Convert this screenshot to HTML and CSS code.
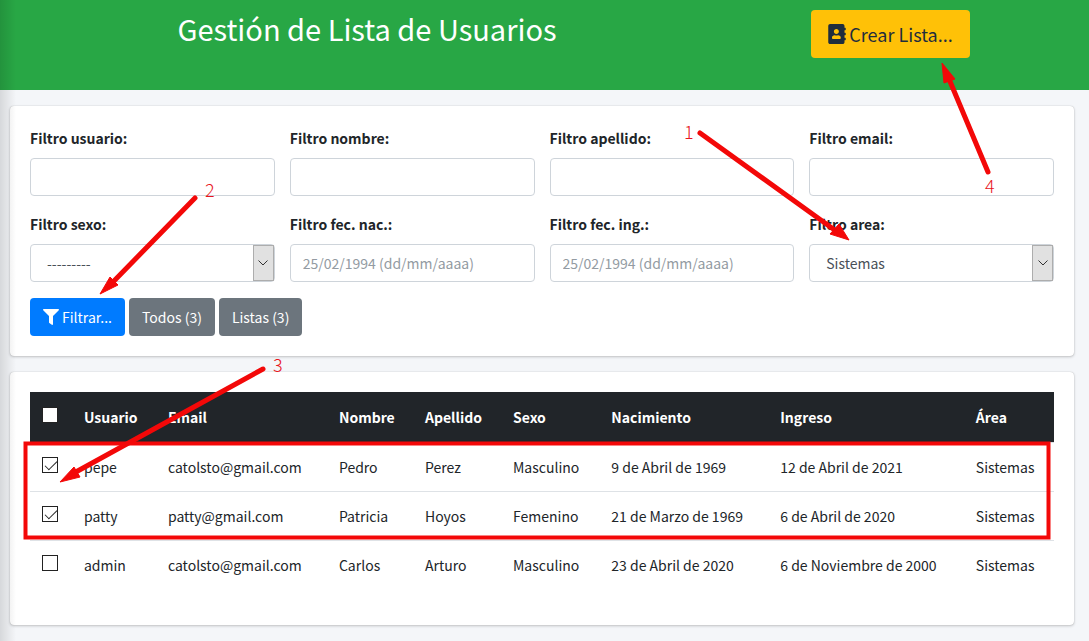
FILE: index.html
```
<!DOCTYPE html>
<html lang="es">
<head>
<meta charset="utf-8">
<title>Gestión de Lista de Usuarios</title>
<link rel="stylesheet" href="styles.css">
</head>
<body>
<header class="top">
  <h1 class="title">Gestión de Lista de Usuarios</h1>
  <div class="top-action">
    <button type="button" class="btn btn-lg btn-warning">
      <svg class="icon-book" viewBox="0 0 448 512" aria-hidden="true"><path fill="currentColor" d="M436 160c6.6 0 12-5.4 12-12v-40c0-6.600-5.400-12-12-12h-20V48c0-26.500-21.500-48-48-48H48C21.500 0 0 21.500 0 48v416c0 26.500 21.500 48 48 48h320c26.500 0 48-21.500 48-48v-48h20c6.600 0 12-5.400 12-12v-40c0-6.600-5.400-12-12-12h-20v-64h20c6.600 0 12-5.400 12-12v-40c0-6.600-5.400-12-12-12h-20v-64h20zm-228-32c35.300 0 64 28.700 64 64s-28.700 64-64 64-64-28.700-64-64 28.700-64 64-64zm112 236.800c0 10.600-10 19.200-22.400 19.200H118.400C106 384 96 375.400 96 364.800v-19.200c0-31.800 30.100-57.600 67.200-57.600h5c12.300 5.100 25.700 8 39.800 8s27.600-2.900 39.800-8h5c37.100 0 67.200 25.800 67.200 57.600v19.200z"/></svg>
      Crear Lista...
    </button>
  </div>
</header>

<main class="content">
  <form class="card">
    <div class="filters">
      <div class="field"><label for="usuario">Filtro usuario:</label><input class="control" id="usuario" type="text"></div>
      <div class="field"><label for="nombre">Filtro nombre:</label><input class="control" id="nombre" type="text"></div>
      <div class="field"><label for="apellido">Filtro apellido:</label><input class="control" id="apellido" type="text"></div>
      <div class="field"><label for="email">Filtro email:</label><input class="control" id="email" type="text"></div>
      <div class="field"><label for="sexo">Filtro sexo:</label>
        <div class="select-wrap">
          <select class="control select" id="sexo"><option>---------</option><option>Masculino</option><option>Femenino</option></select>
          <span class="drop"><svg viewBox="0 0 10 6" aria-hidden="true"><path d="M.5.5 5 5 9.500.5" fill="none" stroke="#333"/></svg></span>
        </div>
      </div>
      <div class="field"><label for="nac">Filtro fec. nac.:</label><input class="control" id="nac" type="text" placeholder="25/02/1994 (dd/mm/aaaa)"></div>
      <div class="field"><label for="ing">Filtro fec. ing.:</label><input class="control" id="ing" type="text" placeholder="25/02/1994 (dd/mm/aaaa)"></div>
      <div class="field"><label for="area">Filtro area:</label>
        <div class="select-wrap">
          <select class="control select" id="area"><option>Sistemas</option></select>
          <span class="drop"><svg viewBox="0 0 10 6" aria-hidden="true"><path d="M.5.5 5 5 9.500.5" fill="none" stroke="#333"/></svg></span>
        </div>
      </div>
    </div>
    <div class="actions">
      <button type="button" class="btn btn-primary">
        <svg class="icon-filter" viewBox="0 0 512 512" aria-hidden="true"><path fill="currentColor" d="M487.976 0H24.028C2.710 0-8.047 25.866 7.058 40.971L192 225.941V432c0 7.831 3.821 15.170 10.237 19.662l80 55.980C298.020 518.690 320 507.493 320 487.980V225.941l184.947-184.970C520.021 25.896 509.338 0 487.976 0z"/></svg>
        Filtrar...
      </button>
      <button type="button" class="btn btn-secondary">Todos (3)</button>
      <button type="button" class="btn btn-secondary">Listas (3)</button>
    </div>
  </form>

  <section class="card">
    <table class="users">
      <colgroup><col class="c-check"><col class="c-user"><col class="c-mail"><col class="c-name"><col class="c-last"><col class="c-sex"><col class="c-born"><col class="c-start"><col class="c-area"></colgroup>
      <thead>
        <tr><th><input type="checkbox" class="check" aria-label="Seleccionar todos"></th><th>Usuario</th><th>Email</th><th>Nombre</th><th>Apellido</th><th>Sexo</th><th>Nacimiento</th><th>Ingreso</th><th>Área</th></tr>
      </thead>
      <tbody>
        <tr><td><input type="checkbox" class="check" aria-label="Seleccionar pepe" checked></td><td>pepe</td><td>catolsto@gmail.com</td><td>Pedro</td><td>Perez</td><td>Masculino</td><td>9 de Abril de 1969</td><td>12 de Abril de 2021</td><td>Sistemas</td></tr>
        <tr><td><input type="checkbox" class="check" aria-label="Seleccionar patty" checked></td><td>patty</td><td>patty@gmail.com</td><td>Patricia</td><td>Hoyos</td><td>Femenino</td><td>21 de Marzo de 1969</td><td>6 de Abril de 2020</td><td>Sistemas</td></tr>
        <tr><td><input type="checkbox" class="check" aria-label="Seleccionar admin"></td><td>admin</td><td>catolsto@gmail.com</td><td>Carlos</td><td>Arturo</td><td>Masculino</td><td>23 de Abril de 2020</td><td>6 de Noviembre de 2000</td><td>Sistemas</td></tr>
      </tbody>
    </table>
  </section>
</main>

<svg class="notes" viewBox="0 0 1089 641" width="1089" height="641">
  <g class="line">
    <path d="M700 133 836 231"/>
    <path d="M195 198 112 283"/>
    <path d="M263 369 74 473"/>
    <path d="M988 172 949 79"/>
    <rect class="frame" x="25.500" y="443.500" width="1023" height="94"/>
  </g>
  <g class="head">
    <path d="M849 240 839 224 830 234z"/>
    <path d="M100 294 110 277 118 285z"/>
    <path d="M60 482 74 467 80 477z"/>
    <path d="M942 63 944 83 955 79z"/>
  </g>
  <g class="digit">
    <text x="684" y="139">1</text>
    <text x="205" y="197">2</text>
    <text x="273" y="372">3</text>
    <text x="985" y="193">4</text>
  </g>
</svg>
</body>
</html>
```
FILE: styles.css
```
* { box-sizing: border-box; }

body {
  margin: 0;
  min-height: 100vh;
  background: #f4f6f9;
  color: #212529;
  font: 14px/24px "Noto Sans CJK SC", "Noto Sans", sans-serif;
}

body::before {
  content: "";
  position: absolute;
  inset: 0 auto 0 0;
  width: 16px;
  background: linear-gradient(to right, rgba(0, 0, 0, .12), rgba(0, 0, 0, 0));
  z-index: 1;
  pointer-events: none;
}

.top {
  display: grid;
  grid-template-columns: 2fr 1fr;
  align-items: start;
  min-height: 90px;
  padding: 10px 24px 0 18px;
  background: #28a745;
}

.title {
  margin: 0;
  color: #fff;
  font-size: 29px;
  font-weight: 400;
  line-height: 36px;
  text-align: center;
}

.top-action { display: flex; justify-content: center; }

.content {
  display: grid;
  gap: 16px;
  padding: 16px 15px 15px 10px;
}

.card {
  padding: 20px;
  background: #fff;
  border-radius: 4px;
  box-shadow: 0 0 1px rgba(0, 0, 0, .25), 0 1px 3px rgba(0, 0, 0, .2);
}

.filters {
  display: grid;
  grid-template-columns: repeat(4, minmax(0, 1fr));
  gap: 16px 15px;
}

.field label {
  display: block;
  margin-bottom: 8px;
  font-weight: 700;
}

.control {
  display: block;
  width: 100%;
  height: 38px;
  padding: 0 12px;
  border: 1px solid #ced4da;
  border-radius: 4px;
  background: #fff;
  color: #495057;
  font: inherit;
}

.control::placeholder { color: #939ba2; opacity: 1; }

.select-wrap { position: relative; }
.select { appearance: none; padding: 0 32px 0 16px; }

.drop {
  position: absolute;
  top: 1px;
  right: 1px;
  bottom: 1px;
  display: flex;
  align-items: center;
  justify-content: center;
  width: 21px;
  border: 1px solid #adadad;
  background: #e1e1e1;
  pointer-events: none;
}
.drop svg { width: 10px; height: 6px; }

.actions { display: flex; gap: 4px; margin-top: 16px; }

.btn {
  display: flex;
  align-items: center;
  gap: 3px;
  height: 38px;
  padding: 0 13px;
  border: 0;
  border-radius: 4px;
  color: #fff;
  font: inherit;
}
.btn-primary { background: #007bff; }
.btn-secondary { background: #6c757d; }
.btn-warning { background: #ffc107; color: #1f2d3d; }
.btn-lg { height: 48px; padding: 0 17px; font-size: 18px; }
.icon-filter { width: 16px; height: 16px; }
.icon-book { width: 18px; height: 20px; }

.users {
  width: 100%;
  margin-bottom: 16px;
  border-collapse: collapse;
  table-layout: fixed;
}
.users th, .users td {
  height: 49px;
  padding: 0 0 0 12px;
  text-align: left;
  white-space: nowrap;
}
.users th { height: 50px; background: #212529; color: #fff; }
.users td { border-top: 1px solid #dee2e6; }

.c-check { width: 4.1%; }
.c-user { width: 8.2%; }
.c-mail { width: 16.7%; }
.c-name { width: 8.4%; }
.c-last { width: 8.6%; }
.c-sex { width: 9.6%; }
.c-born { width: 16.5%; }
.c-start { width: 19.1%; }
.c-area { width: 8.8%; }

.check {
  appearance: none;
  display: block;
  width: 16px;
  height: 16px;
  margin: 0 0 4px;
  border: 1px solid #222;
  background: #fff;
}
.check:checked::before {
  content: "";
  display: block;
  width: 11px;
  height: 5px;
  margin: 3px 0 0 2px;
  border: solid #222;
  border-width: 0 0 1px 1px;
  transform: rotate(-45deg);
}

.notes {
  position: absolute;
  top: 0;
  left: 0;
  z-index: 2;
  pointer-events: none;
}
.line { fill: none; stroke: #f30808; stroke-width: 5; stroke-linecap: round; }
.frame { stroke-width: 4; }
.head { fill: #f30808; stroke: #f30808; stroke-width: 1; }
.digit { fill: #e8141c; font: 300 18px "Noto Sans CJK SC", sans-serif; }
```
